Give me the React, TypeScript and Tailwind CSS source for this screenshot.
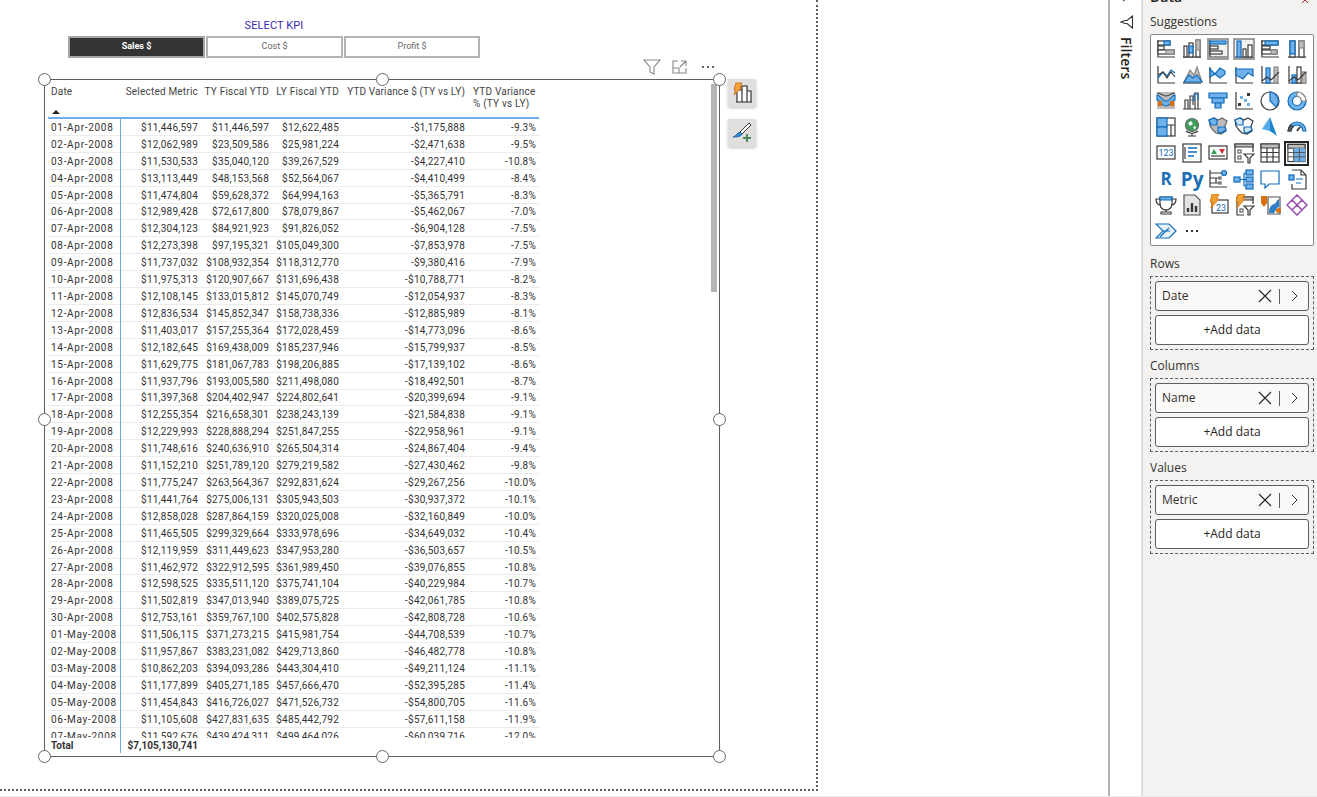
import React from "react";

const rows: string[][] = [
  ["01-Apr-2008", "$11,446,597", "$11,446,597", "$12,622,485", "-$1,175,888", "-9.3%"],
  ["02-Apr-2008", "$12,062,989", "$23,509,586", "$25,981,224", "-$2,471,638", "-9.5%"],
  ["03-Apr-2008", "$11,530,533", "$35,040,120", "$39,267,529", "-$4,227,410", "-10.8%"],
  ["04-Apr-2008", "$13,113,449", "$48,153,568", "$52,564,067", "-$4,410,499", "-8.4%"],
  ["05-Apr-2008", "$11,474,804", "$59,628,372", "$64,994,163", "-$5,365,791", "-8.3%"],
  ["06-Apr-2008", "$12,989,428", "$72,617,800", "$78,079,867", "-$5,462,067", "-7.0%"],
  ["07-Apr-2008", "$12,304,123", "$84,921,923", "$91,826,052", "-$6,904,128", "-7.5%"],
  ["08-Apr-2008", "$12,273,398", "$97,195,321", "$105,049,300", "-$7,853,978", "-7.5%"],
  ["09-Apr-2008", "$11,737,032", "$108,932,354", "$118,312,770", "-$9,380,416", "-7.9%"],
  ["10-Apr-2008", "$11,975,313", "$120,907,667", "$131,696,438", "-$10,788,771", "-8.2%"],
  ["11-Apr-2008", "$12,108,145", "$133,015,812", "$145,070,749", "-$12,054,937", "-8.3%"],
  ["12-Apr-2008", "$12,836,534", "$145,852,347", "$158,738,336", "-$12,885,989", "-8.1%"],
  ["13-Apr-2008", "$11,403,017", "$157,255,364", "$172,028,459", "-$14,773,096", "-8.6%"],
  ["14-Apr-2008", "$12,182,645", "$169,438,009", "$185,237,946", "-$15,799,937", "-8.5%"],
  ["15-Apr-2008", "$11,629,775", "$181,067,783", "$198,206,885", "-$17,139,102", "-8.6%"],
  ["16-Apr-2008", "$11,937,796", "$193,005,580", "$211,498,080", "-$18,492,501", "-8.7%"],
  ["17-Apr-2008", "$11,397,368", "$204,402,947", "$224,802,641", "-$20,399,694", "-9.1%"],
  ["18-Apr-2008", "$12,255,354", "$216,658,301", "$238,243,139", "-$21,584,838", "-9.1%"],
  ["19-Apr-2008", "$12,229,993", "$228,888,294", "$251,847,255", "-$22,958,961", "-9.1%"],
  ["20-Apr-2008", "$11,748,616", "$240,636,910", "$265,504,314", "-$24,867,404", "-9.4%"],
  ["21-Apr-2008", "$11,152,210", "$251,789,120", "$279,219,582", "-$27,430,462", "-9.8%"],
  ["22-Apr-2008", "$11,775,247", "$263,564,367", "$292,831,624", "-$29,267,256", "-10.0%"],
  ["23-Apr-2008", "$11,441,764", "$275,006,131", "$305,943,503", "-$30,937,372", "-10.1%"],
  ["24-Apr-2008", "$12,858,028", "$287,864,159", "$320,025,008", "-$32,160,849", "-10.0%"],
  ["25-Apr-2008", "$11,465,505", "$299,329,664", "$333,978,696", "-$34,649,032", "-10.4%"],
  ["26-Apr-2008", "$12,119,959", "$311,449,623", "$347,953,280", "-$36,503,657", "-10.5%"],
  ["27-Apr-2008", "$11,462,972", "$322,912,595", "$361,989,450", "-$39,076,855", "-10.8%"],
  ["28-Apr-2008", "$12,598,525", "$335,511,120", "$375,741,104", "-$40,229,984", "-10.7%"],
  ["29-Apr-2008", "$11,502,819", "$347,013,940", "$389,075,725", "-$42,061,785", "-10.8%"],
  ["30-Apr-2008", "$12,753,161", "$359,767,100", "$402,575,828", "-$42,808,728", "-10.6%"],
  ["01-May-2008", "$11,506,115", "$371,273,215", "$415,981,754", "-$44,708,539", "-10.7%"],
  ["02-May-2008", "$11,957,867", "$383,231,082", "$429,713,860", "-$46,482,778", "-10.8%"],
  ["03-May-2008", "$10,862,203", "$394,093,286", "$443,304,410", "-$49,211,124", "-11.1%"],
  ["04-May-2008", "$11,177,899", "$405,271,185", "$457,666,470", "-$52,395,285", "-11.4%"],
  ["05-May-2008", "$11,454,843", "$416,726,027", "$471,526,732", "-$54,800,705", "-11.6%"],
  ["06-May-2008", "$11,105,608", "$427,831,635", "$485,442,792", "-$57,611,158", "-11.9%"],
  ["07-May-2008", "$11,592,676", "$439,424,311", "$499,464,026", "-$60,039,716", "-12.0%"],
];

const D = "#3b3a39";
const B = "#0f6cbd";
const L = "#6fb1e8";
const G = "#bdbcbb";
const O = "#d96f0d";

function Ico({ children }: { children?: React.ReactNode }) {
  return (
    <svg width="22" height="22" viewBox="0 0 22 22" fill="none" stroke={D} strokeWidth="1.2">
      {children}
    </svg>
  );
}

const Axis = () => <path d="M3 2v17h17" />;
const Bolt = () => <path d="M5 0h7L9.500 5H12L4 14l1.500-6H3z" fill="#f0a030" stroke={O} strokeWidth="0.8" />;

const icons: React.ReactNode[] = [
  <Ico><Axis /><rect x="3" y="3" width="12" height="4" fill="#fff" /><rect x="9" y="3" width="6" height="4" fill={L} stroke={B} /><rect x="3" y="8" width="6" height="4" fill="#fff" /><rect x="3" y="12" width="16" height="4" fill="#fff" /><rect x="11" y="12" width="8" height="4" fill={G} stroke="#8a8886" /></Ico>,
  <Ico><path d="M2 19h18" /><rect x="3" y="8" width="3" height="11" fill="#fff" /><rect x="8" y="5" width="4" height="14" fill="#fff" /><rect x="8" y="8" width="4" height="7" fill={L} stroke={B} /><rect x="15" y="2" width="4" height="17" fill="#fff" /><rect x="15" y="2" width="4" height="10" fill={G} stroke="#8a8886" /></Ico>,
  <Ico><rect x="1" y="1" width="20" height="20" fill="#f3f2f1" stroke="#8a8886" strokeWidth="1.600" /><path d="M3 2v17h17" /><rect x="3" y="3" width="16" height="3" fill={L} stroke={B} /><rect x="3" y="8" width="8" height="3" fill="#fff" /><rect x="3" y="13" width="12" height="3" fill="#fff" /></Ico>,
  <Ico><rect x="1" y="1" width="20" height="20" fill="#f3f2f1" stroke="#8a8886" strokeWidth="1.600" /><path d="M2 19h18" /><rect x="4" y="3" width="4" height="16" fill={L} stroke={B} /><rect x="10" y="11" width="3" height="8" fill="#fff" /><rect x="15" y="7" width="4" height="12" fill="#fff" /></Ico>,
  <Ico><path d="M3 2v17h17" /><rect x="3" y="3" width="16" height="4" fill="#fff" /><rect x="6" y="3" width="13" height="4" fill={L} stroke={B} /><rect x="3" y="8" width="8" height="3" fill="#fff" /><rect x="3" y="12" width="15" height="4" fill="#fff" /><rect x="12" y="12" width="6" height="4" fill={G} stroke="#8a8886" /></Ico>,
  <Ico><path d="M2 19h18" /><rect x="4" y="3" width="5" height="16" fill="#fff" /><rect x="4" y="3" width="5" height="13" fill={L} stroke={B} /><rect x="13" y="3" width="5" height="16" fill="#fff" /><rect x="13" y="3" width="5" height="7" fill={G} stroke="#8a8886" /></Ico>,

  <Ico><Axis /><path d="M3 14l5-6 4 4 4-6 4 3" stroke={B} /><path d="M3 11l5-3 4 6 4-6 4 5" /></Ico>,
  <Ico><path d="M2 19h18" /><path d="M3 18l6-12 4 5 3-8 5 15z" fill={G} stroke="#8a8886" /><path d="M3 18l5-7 4 3 4-3 5 7z" fill={L} stroke={B} /></Ico>,
  <Ico><path d="M3 3v16h17" /><path d="M3 5l5 5 5-6 5 3v3l-5 4-5-4-5 3z" fill={L} stroke={B} /></Ico>,
  <Ico><path d="M3 3v16h17" /><path d="M3 5h17v7l-5-3-5 6-7-4z" fill={L} stroke={B} /></Ico>,
  <Ico><Axis /><rect x="7" y="4" width="4" height="15" fill={L} stroke={B} /><rect x="15" y="3" width="4" height="16" fill={G} stroke="#8a8886" /><path d="M3 17l5-4 4 3 8-8" /></Ico>,
  <Ico><Axis /><rect x="6" y="11" width="4" height="8" fill={L} stroke={B} /><rect x="11" y="3" width="4" height="16" fill="#fff" /><rect x="16" y="8" width="4" height="11" fill={G} stroke="#8a8886" /><path d="M3 17l5-4 4 3 8-8" /></Ico>,

  <Ico><rect x="2" y="2" width="18" height="17" fill={G} stroke="none" /><path d="M2 5c4 0 4 6 9 6s5-6 9-6v5c-4 0-4 6-9 6s-5-6-9-6z" fill={L} stroke={B} /><rect x="3" y="11" width="4" height="5" fill={O} stroke="none" /><rect x="15" y="11" width="4" height="5" fill={O} stroke="none" /><path d="M2 3c5 0 5 3 9 3s4-3 9-3" /></Ico>,
  <Ico><path d="M2 19h18M4 19V10h3v9M9 19V6h3v9M14 19V3h3v16" /><path d="M10 10h3V4h4v6" stroke={B} /></Ico>,
  <Ico><path d="M2 3h18v5H2z" fill={L} stroke={B} /><path d="M5 8h12v5H5z" fill={L} stroke={B} /><path d="M8 13h6v5H8z" fill={L} stroke={B} /></Ico>,
  <Ico><Axis /><rect x="14" y="3" width="3" height="3" fill={D} stroke="none" /><rect x="7" y="6" width="3" height="3" fill={L} stroke="none" /><rect x="11" y="9" width="3" height="3" fill={L} stroke="none" /><rect x="5" y="13" width="3" height="3" fill={D} stroke="none" /><rect x="14" y="13" width="3" height="3" fill={L} stroke="none" /></Ico>,
  <Ico><circle cx="11" cy="11" r="9" fill="#fff" /><path d="M11 11V2a9 9 0 0 1 6 15z" fill={L} stroke={B} /></Ico>,
  <Ico><circle cx="11" cy="11" r="9" fill={L} stroke={B} /><circle cx="11" cy="11" r="4.500" fill="#fff" stroke={B} /><path d="M11 2a9 9 0 0 1 9 9h-4.500A4.500 4.500 0 0 0 11 6.500z" fill="#fff" stroke="#8a8886" /></Ico>,

  <Ico><rect x="2" y="2" width="18" height="18" fill="#fff" /><rect x="2" y="2" width="10" height="9" fill={L} stroke={B} /><rect x="2" y="11" width="10" height="9" fill={L} stroke={B} /><path d="M12 9h8M16 9v11" /></Ico>,
  <Ico><circle cx="11" cy="9" r="6.500" fill="#3f9d5a" stroke="#666" /><path d="M7 7l3-2 2 3-3 2zM12 11l3-1-1 4z" fill="#fff" stroke="none" /><path d="M5 15c3 3 9 3 12 0M11 17v3M7 20h8" /></Ico>,
  <Ico><path d="M2 4l5-2 4 2 4-2 5 3-2 5 1 5-5 3-5-1-3-3-3-4z" fill={G} stroke="#666" /><path d="M2 4l5-2 3 2v5H4z" fill={L} stroke={B} /><path d="M11 11h7l1 3-5 3-3-1z" fill={L} stroke={B} /></Ico>,
  <Ico><path d="M2 4l5-2 4 2 4-2 5 3-2 5 1 5-5 3-5-1-3-3-3-4z" fill="#fff" /><path d="M2 4l5-2 3 2v5H4z" fill="#cfe4f7" stroke={B} /><path d="M11 11h7l1 3-5 3-3-1z" fill="#cfe4f7" stroke={B} /></Ico>,
  <Ico><path d="M11 1l7 19-7-5z" fill="#1c84cf" stroke="none" /><path d="M11 1L3 13l8 2z" fill="#54a9e8" stroke="none" /></Ico>,
  <Ico><path d="M2 15a9 9 0 0 1 18 0h-3a6 6 0 0 0-12 0z" fill={L} stroke={B} /><path d="M2 15a9 9 0 0 1 3-6l2 2a6 6 0 0 0-2 4z" fill="#666" stroke={D} /><path d="M11 15l3-4" strokeWidth="1.800" /></Ico>,

  <Ico><rect x="2" y="4" width="18" height="13" fill="#fff" /><text x="11" y="14" textAnchor="middle" fontFamily="Roboto, sans-serif" fontSize="9" fill={B} stroke="none">123</text></Ico>,
  <Ico><rect x="2" y="2" width="18" height="18" fill="#fff" /><path d="M7 6h9M7 10h9M7 14h6" stroke={B} strokeWidth="1.600" /><path d="M4 5v12" /></Ico>,
  <Ico><rect x="2" y="4" width="18" height="13" fill="#fff" /><path d="M7 7l3 5H4z" fill="#2e9e5a" stroke="none" /><path d="M12 7h6l-3 5z" fill="#d13438" stroke="none" /><path d="M4 14h14" /></Ico>,
  <Ico><path d="M20 10V2H2v18h9" fill="#fff" /><path d="M2 2h18v3H2z" fill={G} /><rect x="5" y="8" width="3" height="3" fill="#fff" stroke="#666" /><rect x="5" y="14" width="3" height="3" fill="#fff" stroke="#666" /><path d="M11 12h10l-4 4v5h-2v-5z" fill="#fff" /></Ico>,
  <Ico><rect x="2" y="2" width="18" height="18" fill="#fff" /><path d="M2 2h18v4H2z" fill={G} /><path d="M2 10.500h18M2 15h18M8 6v14M14 6v14" /></Ico>,
  <Ico><rect x="2" y="2" width="18" height="18" fill="#fff" /><path d="M2 2h18v4H2z" fill={G} /><rect x="8" y="6" width="12" height="14" fill={L} stroke="none" /><path d="M2 10.500h18M2 15h18M8 6v14M14 6v14" stroke="#555" strokeWidth="1" /></Ico>,

  <span className="text-[17px] leading-[22px] font-bold text-[#1a6fb5] font-['Open_Sans',sans-serif]">R</span>,
  <span className="text-[19px] leading-[22px] font-bold text-[#1a6fb5] font-['Open_Sans',sans-serif]">Py</span>,
  <Ico><Axis /><path d="M3 5h12M3 10h6M9 10v5M3 15h6h5M9 10h4" /><circle cx="17" cy="5" r="2.500" fill={L} stroke={B} /><rect x="12" y="9" width="2" height="2" fill="#fff" stroke="#666" /><rect x="12" y="14" width="2" height="2" fill="#fff" stroke="#666" /></Ico>,
  <Ico><rect x="1" y="9" width="6" height="5" fill={L} stroke={B} /><path d="M7 11.500h4M11 5v13M11 5h2M11 11.500h2M11 18h2" stroke={B} /><rect x="13" y="2" width="7" height="5" fill={L} stroke={B} /><rect x="13" y="9" width="7" height="5" fill={L} stroke={B} /><rect x="13" y="16" width="7" height="5" fill={L} stroke={B} /></Ico>,
  <Ico><path d="M2 3h18v13H10l-4 4v-4H2z" fill="#fff" stroke={B} /></Ico>,
  <Ico><path d="M6 2h9l5 5v14H6v-5" fill="#fff" /><path d="M15 2v5h5" /><rect x="3" y="7" width="5" height="5" fill={L} stroke={B} /><path d="M10 11h7M10 15h5" stroke={B} /></Ico>,

  <Ico><path d="M5 3h12v7a6 6 0 0 1-12 0z" fill="#fff" /><path d="M5 3h12v3H5z" fill={L} stroke={B} /><path d="M5 5H1c0 4 2 6 5 6M17 5h4c0 4-2 6-5 6M11 15v3M6 20h10v-2H6z" /></Ico>,
  <Ico><path d="M3 1h11l5 5v15H3z" fill="#e4e4e4" stroke="#555" /><path d="M7 18v-4M11 18V9M15 18v-6" strokeWidth="2.400" /></Ico>,
  <Ico><rect x="5" y="6" width="16" height="13" fill="#fff" /><Bolt /><text x="14" y="17" textAnchor="middle" fontFamily="Roboto, sans-serif" fontSize="9" fill={B} stroke="none">23</text></Ico>,
  <Ico><path d="M20 10V3H4v18h7" fill="#fff" /><path d="M8 3h12v3H8z" fill={G} /><rect x="7" y="15" width="3" height="3" fill="#fff" stroke="#666" /><path d="M11 12h10l-4 4v5h-2v-5z" fill="#fff" /><Bolt /></Ico>,
  <Ico><path d="M9 3h12v17H9z" fill="#fff" stroke="#555" /><path d="M10 19c0-6 2-8 5-9s2-4 5-5v8c-3 1-3 4-5 6z" fill="#2f7fc4" stroke="none" /><path d="M2 2h6v7l-3 4-3-4z" fill={O} stroke="none" /><rect x="17" y="14" width="5" height="5" rx="2.500" fill={O} stroke="none" /></Ico>,
  <Ico><g stroke="#9b4fb0" strokeWidth="1.500"><path d="M11 1l5 5-5 5-5-5zM16 6l5 5-5 5-5-5zM6 6l5 5-5 5-5-5zM11 11l5 5-5 5-5-5z" /></g></Ico>,

  <Ico><path d="M1 4h13l7 7-7 7H1l7-7z" fill="#eaf3fb" stroke={B} /><path d="M8 11h7M5 17l9-9" stroke={B} /></Ico>,
  <span className="flex gap-[3px] items-center h-[22px]"><i className="w-[2px] h-[2px] bg-[#323130]" /><i className="w-[2px] h-[2px] bg-[#323130]" /><i className="w-[2px] h-[2px] bg-[#323130]" /></span>,
];

function Handle({ className }: { className: string }) {
  return <div className={"absolute w-[13px] h-[13px] rounded-full bg-white border-[1.5px] border-[#666] " + className} />;
}

function Well({ title, field }: { title: string; field: string }) {
  return (
    <div className="mt-[7px]">
      <div className="text-xs leading-[18px] text-[#323130]">{title}</div>
      <div className="mt-[3px] h-[74px] border border-dashed border-[#605e5c] p-1 flex flex-col gap-1">
        <div className="h-[30px] rounded-[3px] border border-[#605e5c] bg-[#faf9f8] flex items-center pl-[6px] pr-[9px] text-xs text-[#323130]">
          <span className="flex-1">{field}</span>
          <svg width="14" height="14" viewBox="0 0 14 14" stroke="#252423" strokeWidth="1.100" fill="none">
            <path d="M1 1l12 12M13 1L1 13" />
          </svg>
          <div className="w-px h-[15px] bg-[#605e5c] mx-[7px]" />
          <svg width="9" height="14" viewBox="0 0 9 14" stroke="#323130" strokeWidth="1" fill="none" className="ml-[3px]">
            <path d="M2 2l5 5-5 5" />
          </svg>
        </div>
        <div className="h-[30px] rounded-[3px] border border-[#605e5c] bg-white flex items-center justify-center text-xs font-medium text-[#252423]">
          +Add data
        </div>
      </div>
    </div>
  );
}

function SlicerBtn({ label, active, w }: { label: string; active?: boolean; w: string }) {
  return (
    <div
      className={
        "h-[22px] border-2 flex items-center justify-center text-[9px] " + w + " " +
        (active ? "border-[#a6a6a6] bg-[#333333] text-white font-bold" : "border-[#b3b3b3] bg-white text-[#666666]")
      }
    >
      {label}
    </div>
  );
}

const cols = "grid grid-cols-[73px_80px_71px_70px_126px_71px]";

function TableRow({ r }: { r: string[] }) {
  return (
    <div className={cols + " h-[16.92px] items-center border-b border-[#ececec]"}>
      <div className="self-start h-[16.92px] flex items-center pl-[3px] border-r border-[#6aaef0] tracking-[0.7px]">{r[0]}</div>
      {r.slice(1).map((v, i) => (
        <div key={i} className="text-right pr-[3px] tracking-[0.22px]">{v}</div>
      ))}
    </div>
  );
}

export default function App() {
  return (
    <div className="relative flex w-[1317px] h-[797px] overflow-hidden bg-white font-['Open_Sans',sans-serif]">
      <div className="relative w-[1108px] h-[796px]">
        <div className="w-[818px] h-[791px] border-r-2 border-b-2 border-dotted border-[#605e5c]" />

        <div className="absolute left-[68px] top-[19px] w-[412px] flex flex-col items-center">
          <div className="text-[11px] leading-[13px] tracking-[0.1px] text-[#3a2bb5] font-['Roboto',sans-serif]">SELECT KPI</div>
          <div className="mt-[4px] flex gap-px font-['Roboto',sans-serif]">
            <SlicerBtn label="Sales $" active w="w-[137px]" />
            <SlicerBtn label="Cost $" w="w-[137px]" />
            <SlicerBtn label="Profit $" w="w-[136px]" />
          </div>
        </div>

        {/* selected visual frame */}
        <div className="absolute left-[44px] top-[79px] w-[676px] h-[678px] border border-[#605e5c]">
          <div className="absolute left-[3px] top-[3px] w-[491px] h-[672px] flex flex-col text-[10px] text-[#333333] font-['Roboto',sans-serif]">
            <div className={cols + " h-[36px] shrink-0 border-b-2 border-[#6aaef0] leading-[12px] pt-[3px] text-[#444]"}>
              <div className="pl-[3px] relative tracking-[0.2px]">
                Date
                <div className="absolute left-[4px] top-[24px] w-0 h-0 border-x-[4px] border-x-transparent border-b-[4px] border-b-[#252423]" />
              </div>
              <div className="text-right pr-[3px] tracking-[0.2px] whitespace-nowrap">Selected Metric</div>
              <div className="text-right pr-[3px] tracking-[0.2px] whitespace-nowrap">TY Fiscal YTD</div>
              <div className="text-right pr-[3px] tracking-[0.2px] whitespace-nowrap">LY Fiscal YTD</div>
              <div className="text-right pr-[3px] tracking-[0.12px] whitespace-nowrap">YTD Variance $ (TY vs LY)</div>
              <div className="pl-[5px] tracking-[0.2px]">YTD Variance % (TY vs LY)</div>
            </div>
            <div className="h-[619px] overflow-hidden">
              {rows.map((r) => (
                <TableRow key={r[0]} r={r} />
              ))}
            </div>
            <div className={cols + " h-[15px] items-center font-bold"}>
              <div className="h-full flex items-center pl-[3px] border-r border-[#6aaef0]">Total</div>
              <div className="text-right pr-[3px] whitespace-nowrap">$7,105,130,741</div>
            </div>
          </div>
          <div className="absolute right-[2px] top-[4px] w-[6px] h-[208px] bg-[#b5b5b5]" />
          <Handle className="-left-[7px] -top-[7px]" />
          <Handle className="left-[331px] -top-[7px]" />
          <Handle className="-right-[7px] -top-[7px]" />
          <Handle className="-left-[7px] top-[333px]" />
          <Handle className="-right-[7px] top-[333px]" />
          <Handle className="-left-[7px] -bottom-[7px]" />
          <Handle className="left-[331px] -bottom-[7px]" />
          <Handle className="-right-[7px] -bottom-[7px]" />
        </div>

        {/* visual header */}
        <div className="absolute left-[643px] top-[59px] flex items-center gap-[11px]">
          <svg width="18" height="16" viewBox="0 0 18 16" fill="none" stroke="#8a8886" strokeWidth="1.100">
            <path d="M1 1h16l-6 7v7l-4-2V8z" />
          </svg>
          <svg width="15" height="14" viewBox="0 0 15 14" fill="none" stroke="#8a8886" strokeWidth="1.100">
            <path d="M6 1H1v12h13V8M9 1h5v5M14 1L8 7M1 8h6v5" />
          </svg>
          <div className="ml-[4px] flex gap-[3px]">
            <i className="w-[2px] h-[2px] bg-[#666]" />
            <i className="w-[2px] h-[2px] bg-[#666]" />
            <i className="w-[2px] h-[2px] bg-[#666]" />
          </div>
        </div>

        <div className="absolute left-[728px] top-[79px] flex flex-col gap-[12px]">
          <div className="w-[28px] h-[28px] bg-[#e1dfdd] rounded-[2px] shadow-[0_1px_3px_rgba(0,0,0,0.25)] flex items-center justify-center">
            <svg width="22" height="22" viewBox="0 0 22 22" fill="none" stroke="#252423" strokeWidth="1.100">
              <path d="M6 20V8h5v12M11 20V4h5v16M16 20V9h4v11M5 20h16" fill="#fff" />
              <path d="M5 1h6L9 5.500h2L3 13l1.500-5.500H3z" fill="#f2a33a" stroke="#c8640c" strokeWidth="0.800" />
            </svg>
          </div>
          <div className="w-[28px] h-[28px] bg-[#e1dfdd] rounded-[2px] shadow-[0_1px_3px_rgba(0,0,0,0.25)] flex items-center justify-center">
            <svg width="22" height="22" viewBox="0 0 22 22" fill="none">
              <path d="M18 1l2 2L11 12 9 10z" fill="#fff" stroke="#333" />
              <path d="M9 10l2 2c-1 3-5 3-9 3 3-1 4-4 7-5z" fill="#2f86d1" stroke="#1a5fa0" strokeWidth="0.800" />
              <path d="M16 12v8M12 16h8" stroke="#4a8a5c" strokeWidth="2" />
            </svg>
          </div>
        </div>
      </div>

      {/* filters pane */}
      <div className="w-[33px] h-[796px] border-l-2 border-[#b3b3b3] bg-white relative">
        <svg width="12" height="12" viewBox="0 0 12 12" fill="none" stroke="#323130" className="absolute left-[10px] -top-[9px]">
          <path d="M3 2l6 4-6 4" />
        </svg>
        <svg width="14" height="14" viewBox="0 0 14 14" fill="none" stroke="#323130" strokeWidth="1.100" className="absolute left-[10px] top-[15px]">
          <path d="M12.500 1v12L7 8.500H5L1 7l4-1.500h2z" />
        </svg>
        <div className="absolute left-[7px] top-[37px] [writing-mode:vertical-rl] text-sm font-semibold tracking-[0.1px] leading-[18px] text-[#252423]">Filters</div>
      </div>

      {/* data pane */}
      <div className="relative w-[176px] h-[796px] border-l-2 border-[#e1dfdd] bg-[#f3f2f0] pl-[7px] pr-[3px] overflow-hidden">
        <div className="text-sm font-semibold leading-[18px] text-[#252423] -mt-[12px]">Data</div>
        <svg width="8" height="8" viewBox="0 0 8 8" fill="none" stroke="#a4262c" className="absolute right-[8px] -top-[4px]">
          <path d="M1 1l6 6M7 1L1 7" />
        </svg>
        <div className="text-xs leading-[18px] text-[#323130] mt-[7px]">Suggestions</div>
        <div className="mt-[3px] h-[212px] rounded-[2px] border border-[#8a8886] bg-white pl-[2px] pt-px">
          <div className="grid grid-cols-[repeat(6,26.100px)] auto-rows-[26px]">
            {icons.map((ic, i) => (
              <div key={i} className="flex items-center justify-center">
                {i === 29 ? <div className="w-[25px] h-[25px] border-2 border-[#252423] flex items-center justify-center">{ic}</div> : ic}
              </div>
            ))}
          </div>
        </div>
        <div className="mt-[9px]" />
        <Well title="Rows" field="Date" />
        <Well title="Columns" field="Name" />
        <Well title="Values" field="Metric" />
      </div>
      <div className="absolute left-0 bottom-0 w-full h-px bg-[#ececec]" />
    </div>
  );
}
